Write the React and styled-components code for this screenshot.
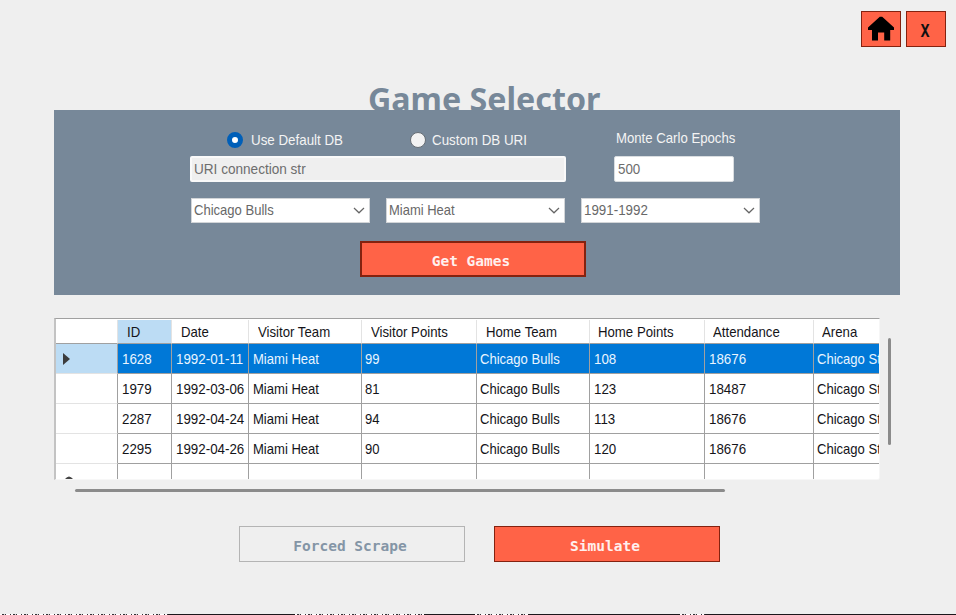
import React from "react";
import styled, { createGlobalStyle } from "styled-components";

const Global = createGlobalStyle`
  * { box-sizing: border-box; }
  body { margin: 0; background: #efefef; overflow: hidden; }
`;

const Window = styled.main`
  width: 956px;
  height: 615px;
  display: flex;
  flex-direction: column;
  background: #efefef;
  overflow: hidden;
  font: 15px/20px "Liberation Sans", Arial, sans-serif;
  color: #111;
`;

const TitleBar = styled.header`
  height: 47px;
  padding: 11px 10px 0 0;
  display: flex;
  justify-content: flex-end;
  gap: 5px;
`;

const Button = styled.button`
  width: ${(p) => p.$w || 226}px;
  height: ${(p) => p.$h || 36}px;
  padding: ${(p) => p.$pad || "3px 4px 0 0"};
  display: flex;
  align-items: center;
  justify-content: center;
  background: ${(p) => (p.$ghost ? "#efefef" : "#ff6347")};
  border: ${(p) => p.$border || 1}px solid ${(p) => (p.$ghost ? "#b4b4b4" : "#84220f")};
  border-radius: 0;
  color: ${(p) => p.$color || "#fff0ee"};
  font: bold ${(p) => p.$size || 14.5}px/18px "DejaVu Sans Mono", monospace;
`;

const Title = styled.h1`
  margin: 0;
  height: 63px;
  padding: 30px 0 0 368px;
  overflow: hidden;
  color: #778899;
  font: bold 32.2px/44px "Noto Sans", "Open Sans", sans-serif;
  white-space: nowrap;
`;

const Squeeze = styled.span`
  display: inline-block;
  white-space: pre;
  transform: scaleX(${(p) => p.$x || 0.89});
  transform-origin: ${(p) => p.$origin || "left"} center;
`;

const Panel = styled.section`
  width: 846px;
  height: 185px;
  margin-left: 54px;
  padding: 18px 0 0 136px;
  background: #778899;
  display: flex;
  flex-direction: column;
`;

const Options = styled.div`
  height: 28px;
  display: grid;
  grid-template-columns: 36px 147px 36px 207px 130px;
  color: #f4f4f4;
`;

const OptionText = styled.span`
  padding-left: ${(p) => p.$left || 25}px;
  padding-top: ${(p) => p.$top ?? 2}px;
  white-space: nowrap;
`;

const Radio = styled.span`
  width: 16px;
  height: 16px;
  margin: 4px 0 0 ${(p) => p.$left}px;
  border-radius: 50%;
  background: ${(p) => (p.$on ? "#fff" : "#f2f2f2")};
  border: ${(p) => (p.$on ? "5px solid #005fb8" : "1px solid #666d74")};
`;

const Fields = styled.div`
  display: flex;
  gap: 48px;
  height: 42px;
`;

const Field = styled.div`
  width: ${(p) => p.$w}px;
  height: 26px;
  color: #6d6d6d;
  background: ${(p) => (p.$disabled ? "#efefef" : "#fff")};
  border: ${(p) => (p.$disabled ? "2px solid #f9f9f9" : "1px solid #d9dde0")};
  border-radius: 2px;
  padding-top: ${(p) => (p.$disabled ? 1 : 2)}px;
  padding-left: ${(p) => (p.$disabled ? 2 : 3)}px;
`;

const Selects = styled.div`
  display: flex;
  gap: 16px;
  padding-left: 1px;
  height: 43px;
`;

const Select = styled.div`
  width: 179px;
  height: 25px;
  padding: 0 4px 1px 2px;
  display: flex;
  align-items: center;
  justify-content: space-between;
  background: #fff;
  border: 1px solid #d2d5d8;
  color: #686868;
`;

const GetRow = styled.div`
  padding-left: 170px;
`;

const DataArea = styled.div`
  height: 176px;
  margin: 23px 0 0 54px;
  display: flex;
  gap: 8px;
`;

const Table = styled.div`
  width: 826px;
  height: 162px;
  overflow: hidden;
  border-left: 2px solid #c3c3c3;
  border-top: 1px solid #a0a0a0;
  border-right: 1px solid #f6f6f6;
  border-bottom: 1px solid #f7f7f7;
  border-radius: 0 0 3px 0;
  background: #fff;
`;

const Row = styled.div`
  height: ${(p) => (p.$head ? 25 : 30)}px;
  width: 900px;
  display: grid;
  grid-template-columns: 62px 54px 77px 113px 115px 113px 115px 109px 142px;
  background: ${(p) => (p.$selected ? "#0078d7" : "#fff")};
  color: ${(p) => (p.$selected ? "#e9f5ff" : "#141419")};
`;

const HeadCell = styled.div`
  margin-top: 1px;
  padding: 2px 0 0 ${(p) => p.$left || 9}px;
  border-right: 1px solid #e3e3e3;
  border-bottom: 1px solid #a0a0a0;
  background: ${(p) => (p.$selected ? "#bcdcf4" : "#fff")};
  white-space: nowrap;
`;

const Cell = styled.div`
  padding: 5px 0 0 ${(p) => p.$left}px;
  border-right: 1px solid #a0a0a0;
  border-bottom: 1px solid #a0a0a0;
  white-space: nowrap;
`;

const RowHead = styled.div`
  display: flex;
  align-items: center;
  padding-left: 7px;
  border-right: 1px solid #a0a0a0;
  border-bottom: 1px solid #e3e3e3;
  background: ${(p) => (p.$selected ? "#bcdcf4" : "#fff")};
`;

const VThumb = styled.div`
  width: 3px;
  height: 107px;
  margin-top: 20px;
  border-radius: 2px;
  background: #8b8b8b;
`;

const HThumb = styled.div`
  width: 650px;
  height: 3px;
  margin: -5px 0 0 75px;
  border-radius: 2px;
  background: #8b8b8b;
`;

const Actions = styled.footer`
  display: flex;
  gap: 29px;
  margin: 34px 0 0 239px;
`;

const speckle =
  "repeating-linear-gradient(90deg,#fff 0 2px,#332f35 2px 4px,#d5d5d5 4px 5px,#332f35 5px 6px,#fff 6px 10px,#332f35 10px 11px)";
const EdgeStrip = styled.div`
  height: 1px;
  margin-top: auto;
  background:
    ${speckle} 0 0 / 168px 1px no-repeat,
    ${speckle} 295px 0 / 129px 1px no-repeat,
    ${speckle} 475px 0 / 53px 1px no-repeat,
    ${speckle} 680px 0 / 25px 1px no-repeat,
    #1b171b;
`;

const Chevron = () => (
  <svg width="12" height="8" viewBox="0 0 12 8" fill="none" stroke="#666" strokeWidth="1.2">
    <path d="M1 2 6 6.8 11 2" />
  </svg>
);

const HomeIcon = () => (
  <svg width="28" height="26" viewBox="0 0 28 26" fill="#000">
    <path d="M12.8 .8H15.2L27 11.6V14H23.2V24.4H17.2V16.5H11V24.4H5V14H1V11.6Z" />
  </svg>
);

const columns = [
  { name: "ID", scale: 0.89, left: 4 },
  { name: "Date", scale: 0.89, left: 4 },
  { name: "Visitor Team", scale: 0.87, left: 4 },
  { name: "Visitor Points", scale: 0.87, left: 3 },
  { name: "Home Team", scale: 0.87, left: 3 },
  { name: "Home Points", scale: 0.89, left: 4 },
  { name: "Attendance", scale: 0.89, left: 4 },
  { name: "Arena", scale: 0.87, left: 3 },
];

const games = [
  ["1628", "1992-01-11", "Miami Heat", "99", "Chicago Bulls", "108", "18676", "Chicago Stadium"],
  ["1979", "1992-03-06", "Miami Heat", "81", "Chicago Bulls", "123", "18487", "Chicago Stadium"],
  ["2287", "1992-04-24", "Miami Heat", "94", "Chicago Bulls", "113", "18676", "Chicago Stadium"],
  ["2295", "1992-04-26", "Miami Heat", "90", "Chicago Bulls", "120", "18676", "Chicago Stadium"],
  ["", "", "", "", "", "", "", ""],
];

export default function App() {
  return (
    <Window>
      <Global />
      <TitleBar>
        <Button $w={40} $pad="0" aria-label="Home"><HomeIcon /></Button>
        <Button $w={40} $size={17} $pad="3px 2px 0 0" $color="#111"><Squeeze $origin="center">X</Squeeze></Button>
      </TitleBar>
      <Title>Game Selector</Title>
      <Panel>
        <Options>
          <Radio $on $left={37} />
          <OptionText><Squeeze>Use Default DB</Squeeze></OptionText>
          <Radio $left={37} />
          <OptionText $left={23}><Squeeze>Custom DB URI</Squeeze></OptionText>
          <OptionText $left={0.01} $top={0}><Squeeze $x={0.878}>Monte Carlo Epochs</Squeeze></OptionText>
        </Options>
        <Fields>
          <Field $w={376} $disabled><Squeeze $x={0.905}>URI connection str</Squeeze></Field>
          <Field $w={120}><Squeeze>500</Squeeze></Field>
        </Fields>
        <Selects>
          {[["Chicago Bulls", 0.87], ["Miami Heat", 0.865], ["1991-1992", 0.89]].map(([v, x]) => (
            <Select key={v}><Squeeze $x={x}>{v}</Squeeze><Chevron /></Select>
          ))}
        </Selects>
        <GetRow><Button $border={2}>Get Games</Button></GetRow>
      </Panel>
      <DataArea>
        <Table>
          <Row $head>
            <HeadCell />
            {columns.map(({ name }, i) => (
              <HeadCell key={name} $left={i > 4 ? 8 : 9} $selected={i === 0}><Squeeze $x={0.88}>{name}</Squeeze></HeadCell>
            ))}
          </Row>
          {games.map((game, r) => (
            <Row key={r} $selected={r === 0}>
              <RowHead $selected={r === 0}>
                {r === 0 && <svg width="8" height="12"><path d="M0 0 7 6 0 12Z" fill="#3c3c3c" /></svg>}
                {r === 4 && <svg width="12" height="8"><path d="M2 4Q6-1 10 4Z" fill="#444" /></svg>}
              </RowHead>
              {game.map((v, c) => (
                <Cell key={c} $left={columns[c].left}><Squeeze $x={columns[c].scale}>{v}</Squeeze></Cell>
              ))}
            </Row>
          ))}
        </Table>
        <VThumb />
      </DataArea>
      <HThumb />
      <Actions>
        <Button $ghost $color="#8495a6">Forced Scrape</Button>
        <Button>Simulate</Button>
      </Actions>
      <EdgeStrip />
    </Window>
  );
}
